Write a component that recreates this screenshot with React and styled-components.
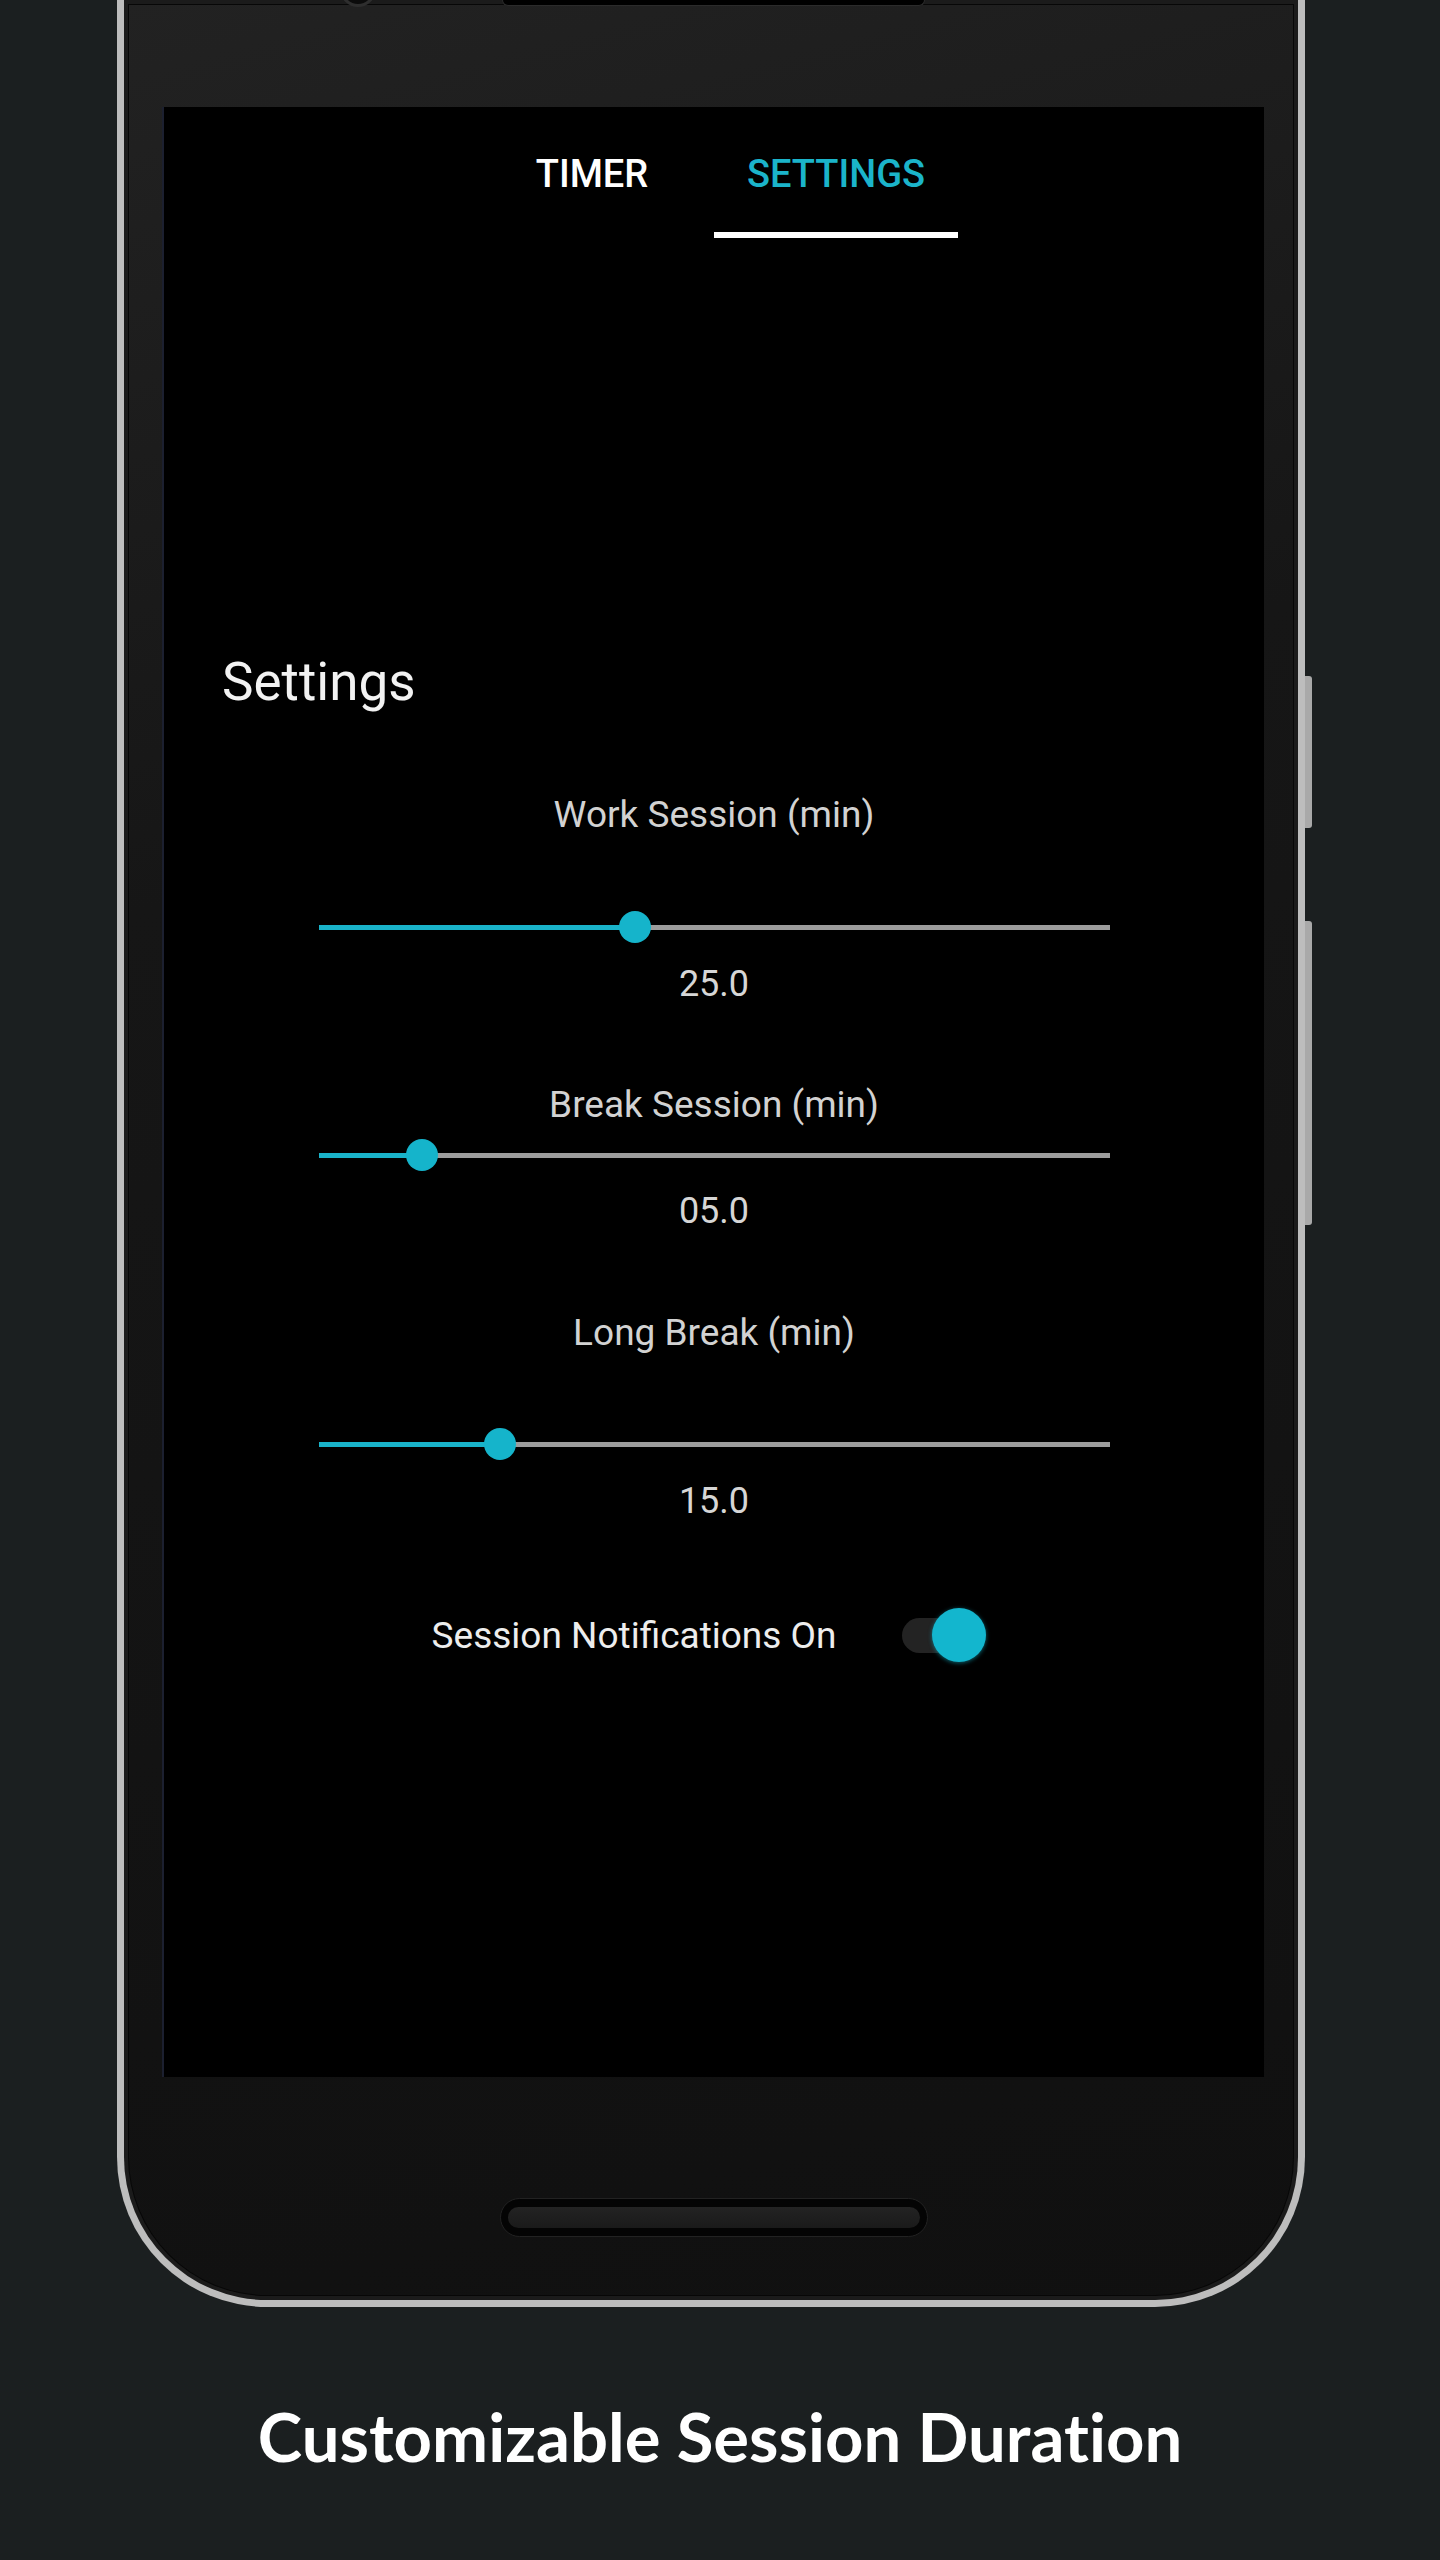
import React from "react";
import styled, { createGlobalStyle } from "styled-components";

const GlobalStyle = createGlobalStyle`
  html, body {
    margin: 0;
    padding: 0;
    background: #1b1f20;
  }
  * {
    box-sizing: border-box;
  }
`;

const Page = styled.div`
  width: 1440px;
  height: 2560px;
  overflow: hidden;
  background: #1b1f20;
  display: flex;
  flex-direction: column;
`;

const Phone = styled.div`
  position: relative;
  width: 1188px;
  margin-left: 117px;
  border: 7px solid #bdbdbd;
  border-top: none;
  border-radius: 0 0 150px 150px;
  padding: 107px 34px 0 40px;
  background: linear-gradient(165deg, #222 0%, #161616 35%, #101010 100%);
  box-shadow: inset 0 0 0 4px #1b1b1b, inset 0 0 0 5px #070707;
`;

const Speaker = styled.div`
  position: absolute;
  top: 0;
  left: 378px;
  width: 423px;
  height: 6px;
  background: #000;
  border: 1px solid #2b2b2b;
  border-top: none;
  border-radius: 0 0 10px 10px;
`;

const Camera = styled.div`
  position: absolute;
  top: -29px;
  left: 216px;
  width: 36px;
  height: 36px;
  border-radius: 50%;
  background: #0b0b0b;
  border: 3px solid #2e2e2e;
`;

const SideButton = styled.div`
  position: absolute;
  right: -14px;
  top: ${(props) => props.$top}px;
  width: 7px;
  height: ${(props) => props.$height}px;
  background: #a9a9a9;
  border-radius: 0 3px 3px 0;
`;

const Screen = styled.div`
  width: 1100px;
  height: 1970px;
  background: #000;
  box-shadow: -2px 0 0 #1c2030;
  display: flex;
  flex-direction: column;
  font-family: Roboto, "Liberation Sans", sans-serif;
`;

const TabBar = styled.div`
  display: flex;
  justify-content: center;
`;

const Tab = styled.div`
  width: 244px;
  padding: 48px 0 39px;
  border-bottom: 6px solid ${(props) => (props.$active ? "#ffffff" : "transparent")};
  text-align: center;
  font-size: 38px;
  line-height: 1;
  font-weight: 500;
  color: ${(props) => (props.$active ? "#1bb4ca" : "#ffffff")};
`;

const Heading = styled.h1`
  margin: 418px 0 0;
  padding-left: 58px;
  font-size: 53px;
  line-height: 1;
  font-weight: 400;
  color: #f2f2f2;
`;

const Controls = styled.div`
  display: flex;
  flex-direction: column;
  align-items: center;
`;

const Label = styled.div`
  margin-top: ${(props) => props.$gap}px;
  font-size: 37px;
  line-height: 1;
  color: #d2d2d2;
`;

const Slider = styled.div`
  position: relative;
  width: 791px;
  height: 32px;
  margin-top: ${(props) => props.$gap}px;
  display: flex;
  align-items: center;
`;

const Track = styled.div`
  width: 100%;
  height: 5px;
  background: linear-gradient(
    to right,
    #19b3c9 0%,
    #19b3c9 ${(props) => props.$pct}%,
    #9c9c9c ${(props) => props.$pct}%,
    #9c9c9c 100%
  );
`;

const Thumb = styled.div`
  position: absolute;
  top: 0;
  left: calc(${(props) => props.$pct}% - 16px);
  width: 32px;
  height: 32px;
  border-radius: 50%;
  background: #15b4cb;
`;

const Value = styled.div`
  margin-top: ${(props) => props.$gap}px;
  font-size: 36px;
  line-height: 1;
  color: #d6d6d6;
`;

const ToggleRow = styled.div`
  margin: 89px 10px 0 0;
  display: flex;
  align-items: center;
  gap: 66px;
  font-size: 37px;
  line-height: 1;
  color: #ededed;
`;

const Switch = styled.div`
  position: relative;
  width: 84px;
  height: 54px;
`;

const SwitchTrack = styled.div`
  position: absolute;
  left: 0;
  top: 10px;
  width: 72px;
  height: 35px;
  border-radius: 18px;
  background: #232323;
`;

const SwitchThumb = styled.div`
  position: absolute;
  right: 0;
  top: 0;
  width: 54px;
  height: 54px;
  border-radius: 50%;
  background: #13b6ce;
  box-shadow: 0 1px 4px rgba(19, 182, 206, 0.55);
`;

const Bezel = styled.div`
  height: 223px;
  padding-top: 121px;
  display: flex;
  justify-content: center;
`;

const HomeButton = styled.div`
  width: 428px;
  height: 39px;
  border-radius: 20px;
  background: #040404;
  border: 1px solid #222;
  display: flex;
  align-items: center;
  justify-content: center;
`;

const HomeInner = styled.div`
  width: 412px;
  height: 21px;
  border-radius: 11px;
  background: linear-gradient(#232323, #1a1a1a);
`;

const Caption = styled.div`
  margin-top: 96px;
  text-align: center;
  font-family: Lato, "Liberation Sans", sans-serif;
  font-weight: 700;
  font-size: 67px;
  line-height: 1;
  font-variant-ligatures: none;
  color: #ffffff;
`;

const sliders = [
  { label: "Work Session (min)", value: "25.0", pct: 40, labelGap: 87, trackGap: 78, valueGap: 23 },
  { label: "Break Session (min)", value: "05.0", pct: 13.1, labelGap: 84, trackGap: 16, valueGap: 22 },
  { label: "Long Break (min)", value: "15.0", pct: 23, labelGap: 85, trackGap: 77, valueGap: 23 },
];

export default function App() {
  return (
    <Page>
      <GlobalStyle />
      <Phone>
        <Camera />
        <Speaker />
        <SideButton $top={676} $height={152} />
        <SideButton $top={921} $height={304} />
        <Screen>
          <TabBar>
            <Tab>TIMER</Tab>
            <Tab $active>SETTINGS</Tab>
          </TabBar>
          <Heading>Settings</Heading>
          <Controls>
            {sliders.map((s) => (
              <React.Fragment key={s.label}>
                <Label $gap={s.labelGap}>{s.label}</Label>
                <Slider $gap={s.trackGap}>
                  <Track $pct={s.pct} />
                  <Thumb $pct={s.pct} />
                </Slider>
                <Value $gap={s.valueGap}>{s.value}</Value>
              </React.Fragment>
            ))}
            <ToggleRow>
              <span>Session Notifications On</span>
              <Switch>
                <SwitchTrack />
                <SwitchThumb />
              </Switch>
            </ToggleRow>
          </Controls>
        </Screen>
        <Bezel>
          <HomeButton>
            <HomeInner />
          </HomeButton>
        </Bezel>
      </Phone>
      <Caption>Customizable Session Duration</Caption>
    </Page>
  );
}
